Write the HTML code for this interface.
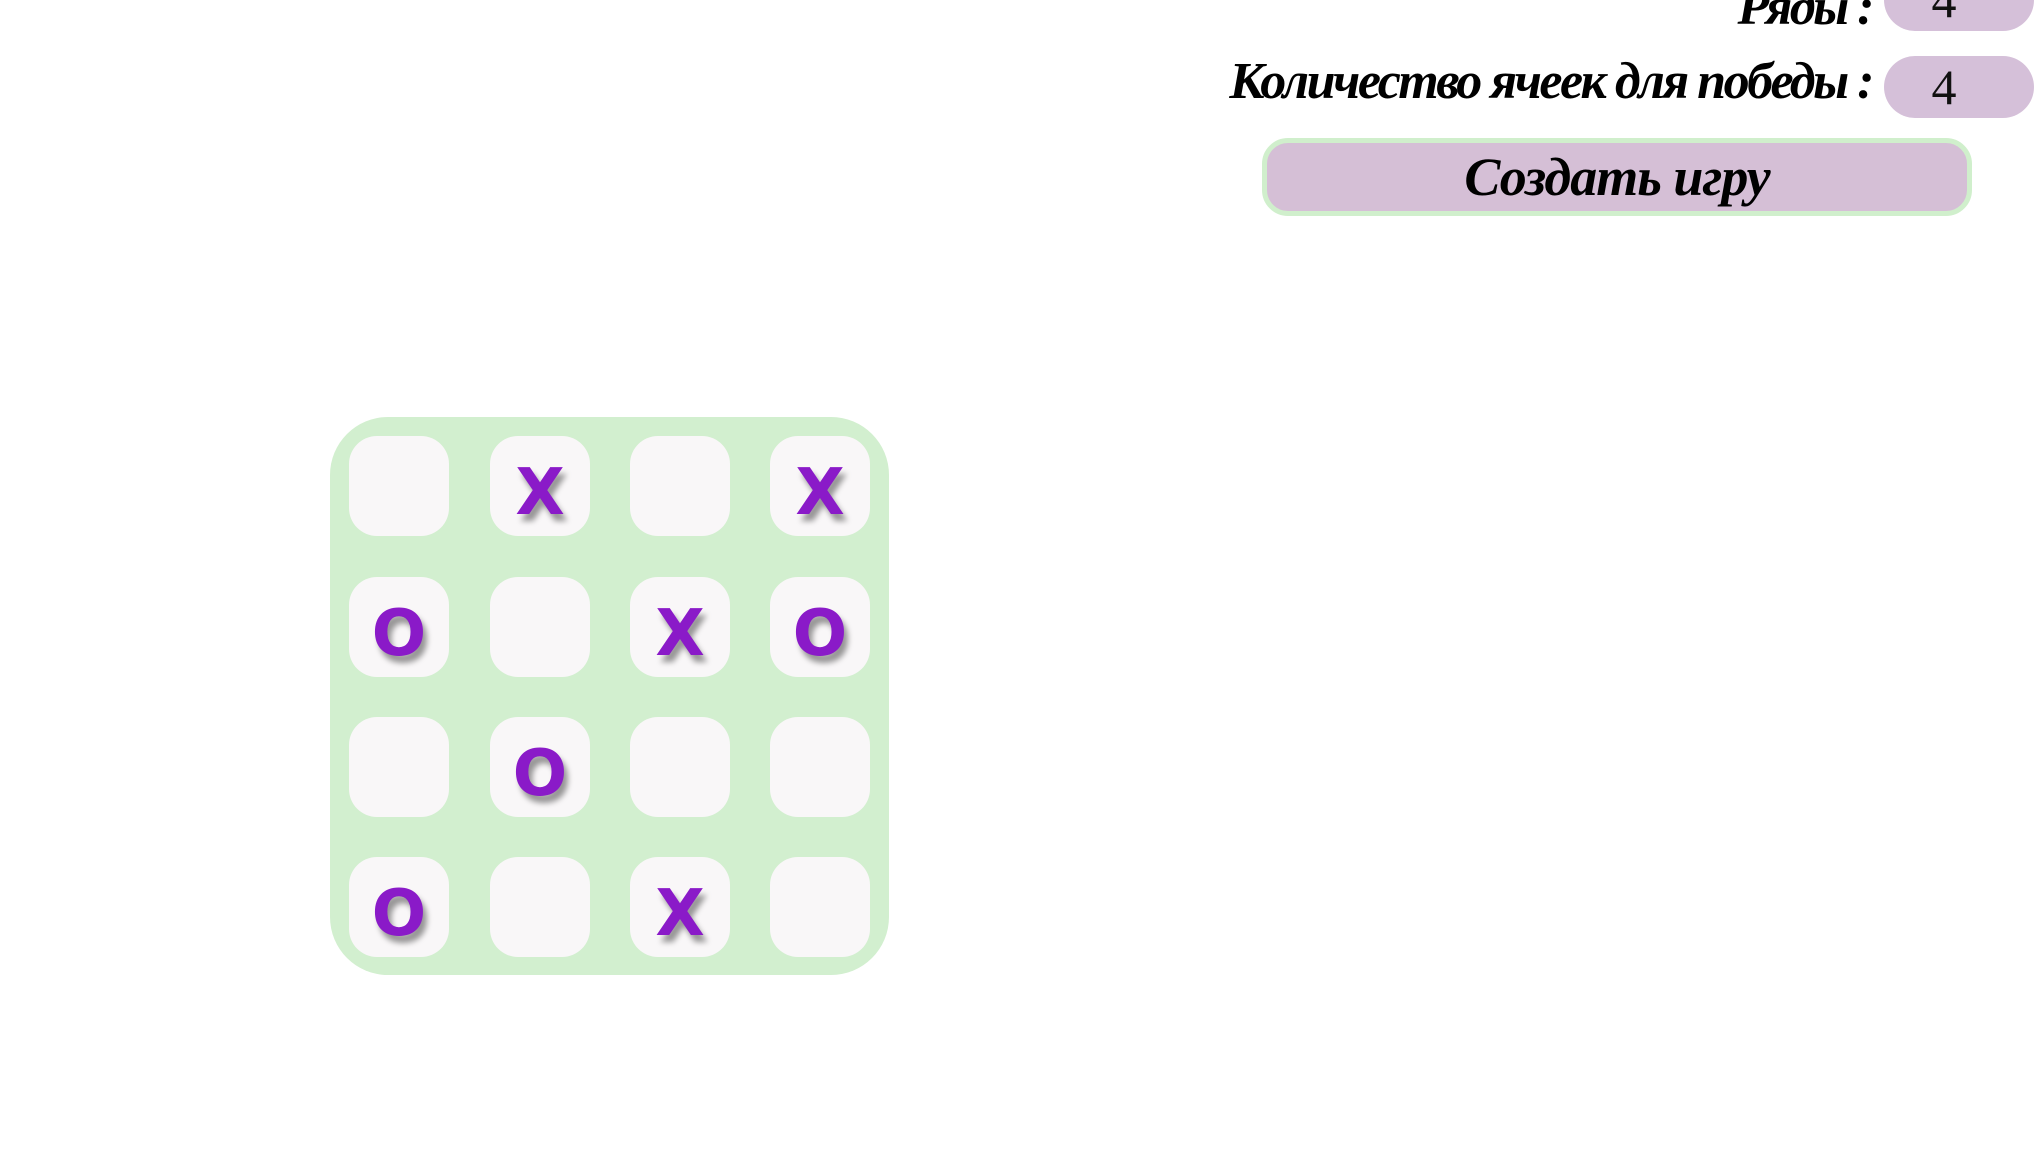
<!DOCTYPE html>
<html><head><meta charset="utf-8"><style>
body{margin:0;width:2036px;height:1152px;background:#fff;position:relative;overflow:hidden;font-family:"Liberation Serif",serif}
.lbl{position:absolute;right:164px;font-style:italic;font-weight:bold;font-size:52px;color:#000;white-space:nowrap;letter-spacing:-2.5px}
.inp{position:absolute;left:1884px;width:150px;height:62px;background:#d5c0d9;border-radius:31px;text-align:center;font-size:50px;line-height:62px;color:#111;box-sizing:border-box;padding-right:30px}
.btn{position:absolute;left:1262px;top:138px;width:700px;height:68px;background:#d5bfd6;border:5px solid #d0efcc;border-radius:26px;text-align:center;font-style:italic;font-weight:bold;font-size:54px;line-height:68px;letter-spacing:-1px}
.board{position:absolute;left:330px;top:417px;width:559px;height:558px;background:#d2efcf;border-radius:58px}
.c{position:absolute;width:100px;height:100px;background:#f9f7f8;border-radius:28px;text-align:center;line-height:114px;font-family:"DejaVu Sans",sans-serif;font-weight:bold;font-size:64px;color:#8a1ac8;text-shadow:4px 7px 6px rgba(0,0,0,.4)}
</style></head><body>
<div class="lbl" style="top:-22px">Ряды :</div>
<div class="inp" style="top:-31px">4</div>
<div class="lbl" style="top:52px">Количество ячеек для победы :</div>
<div class="inp" style="top:56px">4</div>
<div class="btn">Создать игру</div>
<div class="board"></div>
<div class="c" style="left:349px;top:436px"></div>
<div class="c" style="left:490px;top:436px">X</div>
<div class="c" style="left:630px;top:436px"></div>
<div class="c" style="left:770px;top:436px">X</div>
<div class="c" style="left:349px;top:577px">O</div>
<div class="c" style="left:490px;top:577px"></div>
<div class="c" style="left:630px;top:577px">X</div>
<div class="c" style="left:770px;top:577px">O</div>
<div class="c" style="left:349px;top:717px"></div>
<div class="c" style="left:490px;top:717px">O</div>
<div class="c" style="left:630px;top:717px"></div>
<div class="c" style="left:770px;top:717px"></div>
<div class="c" style="left:349px;top:857px">O</div>
<div class="c" style="left:490px;top:857px"></div>
<div class="c" style="left:630px;top:857px">X</div>
<div class="c" style="left:770px;top:857px"></div>
</body></html>
